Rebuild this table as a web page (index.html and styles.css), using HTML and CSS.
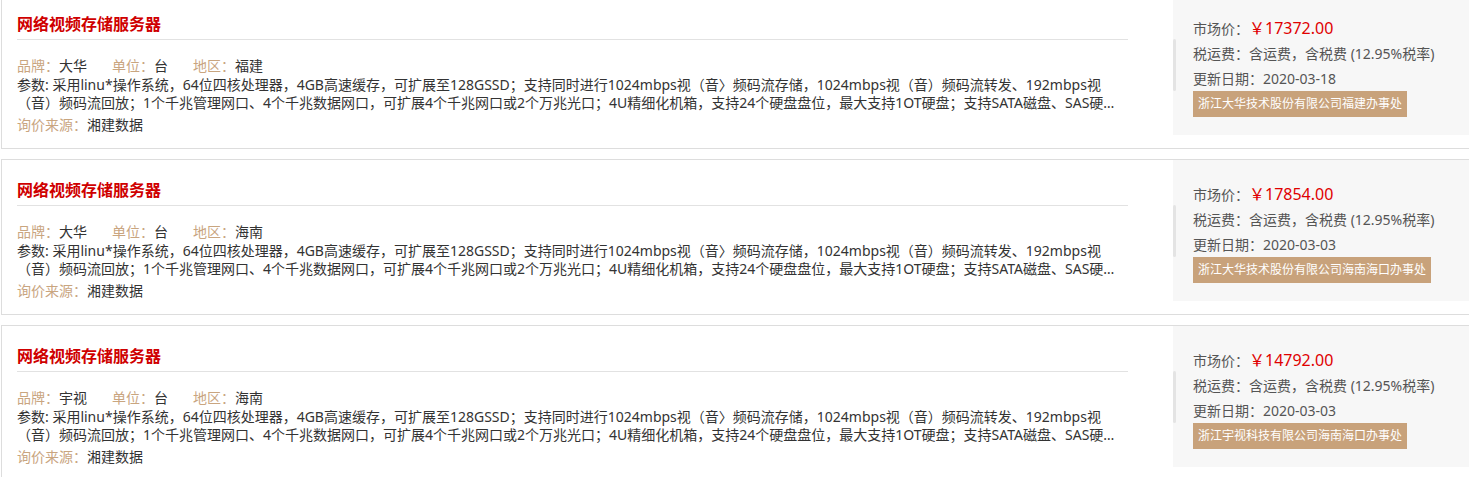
FILE: index.html
```html
<!DOCTYPE html>
<html lang="zh-CN">
  <head>
    <meta charset="UTF-8" />
    <meta name="viewport" content="width=device-width, initial-scale=1.0" />
    <title>询价列表</title>
    <link rel="stylesheet" href="styles.css">
  </head>
  <body>
    <div class="price-list">
      <div class="item">
        <div class="info">
          <h3 class="title">网络视频存储服务器</h3>
          <p class="meta">
            <span><em>品牌：</em>大华</span>
            <span><em>单位：</em>台</span>
            <span><em>地区：</em>福建</span>
          </p>
          <p class="params">参数: 采用linu*操作系统，64位四核处理器，4GB高速缓存，可扩展至128GSSD；支持同时进行1024mbps视（音〉频码流存储，1024mbps视（音）频码流转发、192mbps视（音）频码流回放；1个千兆管理网口、4个千兆数据网口，可扩展4个千兆网口或2个万兆光口；4U精细化机箱，支持24个硬盘盘位，最大支持1OT硬盘；支持SATA磁盘、SAS硬盘，支持RAID0、1、5、10</p>
          <p class="source"><em>询价来源：</em>湘建数据</p>
        </div>
        <div class="quote">
          <span class="bar"></span>
          <p>市场价：<span class="price">￥17372.00</span></p>
          <p>税运费：含运费，含税费 (12.95%税率)</p>
          <p>更新日期：2020-03-18</p>
          <span class="agent">浙江大华技术股份有限公司福建办事处</span>
        </div>
      </div>

      <div class="item">
        <div class="info">
          <h3 class="title">网络视频存储服务器</h3>
          <p class="meta">
            <span><em>品牌：</em>大华</span>
            <span><em>单位：</em>台</span>
            <span><em>地区：</em>海南</span>
          </p>
          <p class="params">参数: 采用linu*操作系统，64位四核处理器，4GB高速缓存，可扩展至128GSSD；支持同时进行1024mbps视（音〉频码流存储，1024mbps视（音）频码流转发、192mbps视（音）频码流回放；1个千兆管理网口、4个千兆数据网口，可扩展4个千兆网口或2个万兆光口；4U精细化机箱，支持24个硬盘盘位，最大支持1OT硬盘；支持SATA磁盘、SAS硬盘，支持RAID0、1、5、10</p>
          <p class="source"><em>询价来源：</em>湘建数据</p>
        </div>
        <div class="quote">
          <span class="bar"></span>
          <p>市场价：<span class="price">￥17854.00</span></p>
          <p>税运费：含运费，含税费 (12.95%税率)</p>
          <p>更新日期：2020-03-03</p>
          <span class="agent">浙江大华技术股份有限公司海南海口办事处</span>
        </div>
      </div>

      <div class="item">
        <div class="info">
          <h3 class="title">网络视频存储服务器</h3>
          <p class="meta">
            <span><em>品牌：</em>宇视</span>
            <span><em>单位：</em>台</span>
            <span><em>地区：</em>海南</span>
          </p>
          <p class="params">参数: 采用linu*操作系统，64位四核处理器，4GB高速缓存，可扩展至128GSSD；支持同时进行1024mbps视（音〉频码流存储，1024mbps视（音）频码流转发、192mbps视（音）频码流回放；1个千兆管理网口、4个千兆数据网口，可扩展4个千兆网口或2个万兆光口；4U精细化机箱，支持24个硬盘盘位，最大支持1OT硬盘；支持SATA磁盘、SAS硬盘，支持RAID0、1、5、10</p>
          <p class="source"><em>询价来源：</em>湘建数据</p>
        </div>
        <div class="quote">
          <span class="bar"></span>
          <p>市场价：<span class="price">￥14792.00</span></p>
          <p>税运费：含运费，含税费 (12.95%税率)</p>
          <p>更新日期：2020-03-03</p>
          <span class="agent">浙江宇视科技有限公司海南海口办事处</span>
        </div>
      </div>
    </div>
  </body>
</html>
```

FILE: styles.css
```css
html,
body {
  overflow: hidden;
}
body {
  margin: 0;
  background-color: #fff;
  font-family: "Noto Sans", "Noto Sans CJK SC", sans-serif;
  color: #333;
}
:root {
  --title-clr: #cf0000;
  --label-clr: #c9a57f;
  --line-clr: #dddddd;
  --quote-bg: #f7f7f7;
}
p {
  margin: 0;
}
em {
  font-style: normal;
  color: var(--label-clr);
}

.price-list {
  margin-top: -7px;
  margin-left: 1px;
  width: 1469px;
  display: flex;
  flex-direction: column;
  gap: 10px;
}

.item {
  display: flex;
  height: 156px;
  box-sizing: border-box;
  border: 1px solid var(--line-clr);
}

.info {
  flex: 1;
  padding: 18px 45px 0 15px;
  font-size: 14px;
  min-width: 0;
  .title {
    margin: 0;
    font-size: 16px;
    line-height: 24px;
    font-weight: bold;
    color: var(--title-clr);
    padding-bottom: 3px;
    border-bottom: 1px solid #e2e2e2;
  }
  .meta {
    margin-top: 16px;
    line-height: 20px;
    display: flex;
    gap: 25px;
  }
  .params {
    line-height: 18px;
    display: -webkit-box;
    -webkit-line-clamp: 2;
    -webkit-box-orient: vertical;
    overflow: hidden;
  }
  .source {
    margin-top: 3px;
    line-height: 20px;
  }
}

.quote {
  position: relative;
  width: 296px;
  height: 141px;
  box-sizing: border-box;
  padding: 22px 0 0 20px;
  background-color: var(--quote-bg);
  font-size: 14px;
  color: #555;
  p {
    line-height: 25px;
  }
  .price {
    font-size: 16px;
    color: #e00000;
  }
  .agent {
    display: inline-block;
    padding: 0 5px;
    line-height: 26px;
    font-size: 12px;
    color: #fff;
    background-color: #c8a27b;
  }
  .bar {
    position: absolute;
    left: 0;
    top: 45px;
    width: 3px;
    height: 52px;
    border-radius: 2px;
    background-color: #e4e4e4;
  }
}
```
